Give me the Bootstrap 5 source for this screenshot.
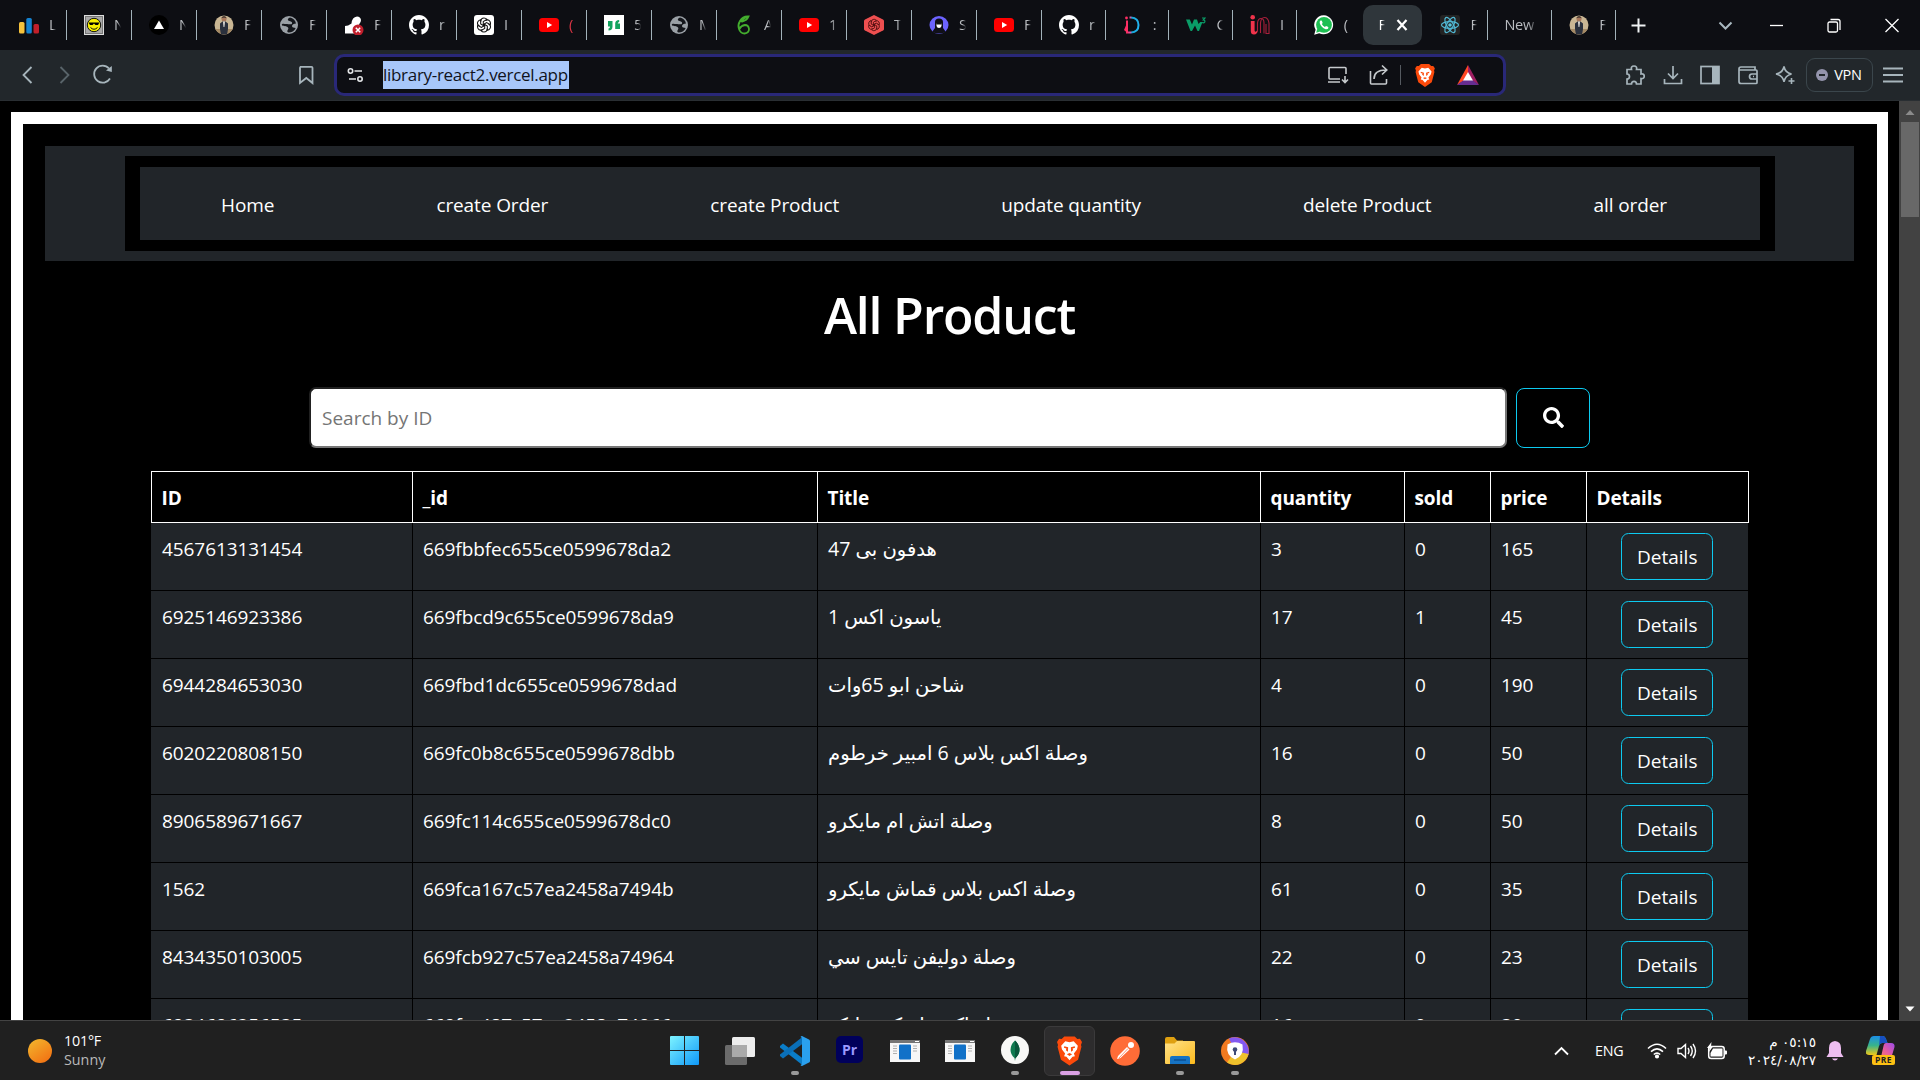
<!DOCTYPE html>
<html lang="en">
<head>
<meta charset="utf-8">
<title>All Product</title>
<link href="https://cdn.jsdelivr.net/npm/bootstrap@5.3.0/dist/css/bootstrap.min.css" rel="stylesheet">
<style>
html, body { height: 1080px; overflow: hidden; background: #000; }
body { font-family: "Open Sans", "Noto Sans", "DejaVu Sans", sans-serif; font-size: 19px; color: #fff; width: 1920px; line-height: 30px; }
svg { display: block; flex: none; }
/* browser chrome */
.tabstrip { height: 50px; background: #0d0e13; padding-left: 2px; }
.tab { width: 65px; height: 30px; padding-left: 17px; border-right: 1px solid #a2b2ba; flex: none; }
.tab-s { width: 63.7px; }
.tab svg { width: 20px; height: 20px; }
.tab-text { margin-left: 10px; width: 7px; overflow: hidden; white-space: nowrap; font-size: 14.5px; line-height: 20px; color: #b9bcc0; -webkit-mask-image: linear-gradient(90deg, #000 50%, transparent); mask-image: linear-gradient(90deg, #000 50%, transparent); }
.tab-wide { width: 34px; margin-left: -1px; letter-spacing: -.3px; -webkit-mask-image: linear-gradient(90deg, #000 70%, transparent); mask-image: linear-gradient(90deg, #000 70%, transparent); }
.tab-active { width: 59px; height: 40px; border-radius: 10px; background: #2f363b; flex: none; margin: 0 1px 0 3px; padding-left: 5px; }
.toolbar-row { height: 51px; background: #22272b; border-bottom: 1px solid #292e32; }
.urlbox { width: 1172px; height: 42px; margin-left: 20px; border: 3px solid #292878; border-radius: 10px; background: #0d0e13; padding-left: 10px; padding-right: 24px; }
.url-sel { background: #a8c7fa; color: #10131c; font-size: 17px; line-height: 28px; height: 28px; width: 186px; margin-left: 19px; white-space: nowrap; letter-spacing: -.3px; }
.url-sep { width: 1px; height: 20px; background: #555a60; margin: 0 14px 0 6px; }
.vpn { width: 67px; height: 34px; border: 1px solid #3b464c; border-radius: 9px; font-size: 14.5px; line-height: 20px; letter-spacing: -.2px; gap: 6px; margin: 0 -7px; }
.vpn-dot { width: 12px; height: 12px; border-radius: 50%; background: #9494ac; }
.tools { gap: 17.5px; padding-right: 17px; }
/* page */
.viewport { height: 919px; overflow: hidden; }
.page-frame { width: 1877px; margin: 11px 0 0 11px; height: 1000px; border: 12px solid #fff; border-right-width: 11px; border-bottom: 0; padding: 22px 23px 0 22px; flex: none; }
.site-nav { background: #212529; height: 115px; padding: 10px 79px 10px 80px; }
.site-nav-in { border: solid #000; border-width: 11px 15px; height: 95px; padding: 2px 12px 0 0; }
.site-nav a { color: #fff; text-decoration: none; letter-spacing: -.1px; }
.headline { font-size: 50px; font-weight: 600; line-height: 60px; margin: 24px 0 0; letter-spacing: -1.2px; }
.search-row { gap: 9px; margin-top: 41px; }
.search-in { width: 1198px; height: 61px; border: 2px inset #767676; border-radius: 7px; background: #fff; padding: 1px 11px 0; font-size: 19px; outline: 0; }
.search-in::placeholder { color: #757575; }
.search-btn { width: 74px; height: 60px; --bs-btn-border-color: #0dcaf0; --bs-btn-border-radius: 8px; margin-top: 2px; padding: 0 0 2px; }
.products { width: 1597px; table-layout: fixed; color: #fff; border-collapse: collapse; margin: 23px auto 0; }
.products th { border: 1px solid #fff; height: 51px; padding: 2px 10px 0; background: #000; font-size: 19px; letter-spacing: -.1px; line-height: 30px; }
.products td { border: 1px solid #000; height: 68px; padding: 11px 10px 0 10.5px; background: #212529; vertical-align: top; line-height: 30px; letter-spacing: -.08px; }
.products td:nth-child(3) { letter-spacing: 0; font-size: 19.6px; }
.products td:last-child { text-align: center; border-right: 0; padding: 10px; }
.products td:first-child { border-left-color: #212529; }
.btn-details { --bs-btn-color: #fff; --bs-btn-border-color: #0dcaf0; --bs-btn-border-radius: 7.5px; width: 92px; height: 47px; font-size: 19px; line-height: 30px; padding: 7px 0; vertical-align: top; }
.vscroll { width: 21px; background: #424242; flex: none; }
.vthumb { width: 18px; height: 95px; background: #686868; }
/* taskbar */
.taskbar { height: 60px; background: #202020; border-top: 1px solid #434343; }
.weather { width: 657px; padding-left: 28px; font-size: 14.3px; line-height: 19px; letter-spacing: -.2px; }
.sun { width: 24px; height: 24px; border-radius: 50%; background: linear-gradient(145deg, #f2b92e, #f26a10); }
.weather-text { margin: -2px 0 0 12px; }
.app { width: 55.050px; height: 50px; position: relative; border-radius: 6px; flex: none; }
.app.on::after { content: ""; position: absolute; bottom: 1px; left: 50%; margin-left: -4px; width: 8px; height: 4px; border-radius: 2px; background: #999; }
.app-live::before { content: ""; position: absolute; inset: 0 2px; border: 1px solid #3b3a3b; background: #2d2c2d; border-radius: 6px; }
.app-live svg { position: relative; }
.app.app-live::after { background: #d99fe3; width: 20px; margin-left: -10px; }
.tray { padding-right: 25px; font-size: 14.3px; }
.lang { margin: 0 22px 0 26px; width: 30px; letter-spacing: -.2px; }
.clock { font-family: "DejaVu Sans", sans-serif; font-size: 13.7px; line-height: 18px; width: 76px; margin: 0 10px 0 13px; }
</style>
</head>
<body>
<svg width="0" height="0" class="position-absolute">
<defs>
<linearGradient id="gw" x1="0" y1="0" x2="1" y2="1"><stop offset="0" stop-color="#7df3ff"/><stop offset="1" stop-color="#0f98f8"/></linearGradient>
<linearGradient id="gf" x1="0" y1="0" x2="1" y2="1"><stop offset="0" stop-color="#ffe28a"/><stop offset="1" stop-color="#fcba1c"/></linearGradient>
<linearGradient id="gc1" x1="0" y1="0" x2="0" y2="1"><stop offset="0" stop-color="#1b8fe8"/><stop offset=".5" stop-color="#38b38a"/><stop offset="1" stop-color="#f0c818"/></linearGradient>
<linearGradient id="gc2" x1="1" y1="0" x2="0" y2="1"><stop offset="0" stop-color="#9b4bea"/><stop offset=".5" stop-color="#e85d9f"/><stop offset="1" stop-color="#f98a50"/></linearGradient>
<linearGradient id="gd" x1="0" y1="0" x2="1" y2="0"><stop offset="0" stop-color="#ff2d62"/><stop offset=".3" stop-color="#c95fb0"/><stop offset=".45" stop-color="#14a7d8"/><stop offset="1" stop-color="#23b4f0"/></linearGradient>
</defs>
<symbol id="yt" viewBox="0 0 20 20"><rect y="3" width="20" height="14" rx="3.5" fill="#f00"/><path d="M8 7l5.2 3L8 13z" fill="#fff"/></symbol>
<symbol id="gh" viewBox="0 0 16 16"><path fill="#fff" d="M8 0C3.58 0 0 3.58 0 8c0 3.54 2.29 6.53 5.47 7.59.4.07.55-.17.55-.38 0-.19-.01-.82-.01-1.49-2.01.37-2.53-.49-2.69-.94-.09-.23-.48-.94-.82-1.13-.28-.15-.68-.52-.01-.53.63-.01 1.08.58 1.23.82.72 1.21 1.87.87 2.33.66.07-.52.28-.87.51-1.07-1.78-.2-3.64-.89-3.64-3.95 0-.87.31-1.59.82-2.15-.08-.2-.36-1.02.08-2.12 0 0 .67-.21 2.2.82.64-.18 1.32-.27 2-.27s1.36.09 2 .27c1.53-1.04 2.2-.82 2.2-.82.44 1.1.16 1.92.08 2.12.51.56.82 1.27.82 2.15 0 3.07-1.87 3.75-3.65 3.95.29.25.54.73.54 1.48 0 1.07-.01 1.93-.01 2.2 0 .21.15.46.55.38A8.01 8.01 0 0 0 16 8c0-4.42-3.58-8-8-8z"/></symbol>
<symbol id="globe" viewBox="0 0 20 20"><circle cx="10" cy="10" r="9" fill="#9aa0a6"/><path d="M11 2.5c-3 1-2.500 3-.5 3.500s3 1 2.500 2.500-4 .5-5.500.5S3 8 2.800 9.500 6 11 7.500 11.500 10 13 9 14.500 8 17 9.500 17.500c3 0 6-1.500 7.200-4.500-2-.2-3.700-.5-3.700-2s2-2.500 4-2.500C16.500 5 14 3 11 2.500z" fill="#14161b"/></symbol>
<symbol id="photo" viewBox="0 0 20 20"><clipPath id="pc"><circle cx="10" cy="10" r="9.500"/></clipPath><g clip-path="url(#pc)"><rect width="20" height="20" fill="#c9b694"/><rect y="14" width="20" height="6" fill="#a58a65"/><circle cx="10" cy="4" r="2.500" fill="#a8785c"/><path d="M7.500 3.500C7.500.5 12.500.5 12.500 3.500L11.500 2.500h-3z" fill="#1a1718"/><path d="M6 8.500l2.500-2h3l2.500 2V14l-1 6H7L6 14z" fill="#2a303d"/><path d="M9 6.500h2L10.400 12h-.9z" fill="#e8e4e0"/></g></symbol>
<symbol id="oai" viewBox="0 0 20 20"><g fill="none" stroke="currentColor" stroke-width="1.150"><g id="pet"><path d="M6.500 6.200Q6.500 2.300 10 2.300q2 0 3.300 1.500L9.200 6.200v4.600"/></g><use href="#pet" transform="rotate(60 10 10)"/><use href="#pet" transform="rotate(120 10 10)"/><use href="#pet" transform="rotate(180 10 10)"/><use href="#pet" transform="rotate(240 10 10)"/><use href="#pet" transform="rotate(300 10 10)"/></g></symbol>
<symbol id="brave" viewBox="0 0 24 28"><path fill="#fb4a0b" d="M7 0h10l2.500 2.500L22 2.300l2 3-1 3 .5 1.500-3.300 12.500L12 28l-8.200-5.700L.5 9.800 1 8.300l-1-3 2-3 2.500.2z"/><path fill="#fff" d="M12 5.500l4-.8 4 4.300-.8 3.500-3 3.800 1 2.700-2.300.5L12 22.800 9.100 19.500l-2.300-.5 1-2.700-3-3.800L4 9l4-4.300z"/><path fill="#fb4a0b" d="M7 9.500l3.700 1-.2 4.200-2-1.500.5-1.700-2.300-.6zM17 9.500l-3.700 1 .2 4.200 2-1.500-.5-1.700 2.300-.6zM9.500 17l2.500-1 2.500 1-2.500 1.700z"/></symbol>
<symbol id="win" viewBox="0 0 30 22"><rect width="30" height="22" fill="#f7f7f7"/><rect width="30" height="3" fill="#757575"/><path d="M25 1.500h4" stroke="#fff" stroke-width="1"/><rect x="9" y="4.500" width="12" height="15" rx="1" fill="#1171c8"/><path d="M3 6h4M3 8.500h4M3 11h4M3 13.500h4M23 6h4M23 8.500h4M23 11h4" stroke="#b0b0b0" stroke-width="1"/></symbol>
</svg>

<div class="d-flex flex-column">
<!-- tab strip -->
<div class="tabstrip d-flex align-items-center">
  <div class="tab d-flex align-items-center"><svg viewBox="0 0 20 20"><rect y="7" width="5.500" height="11.500" rx="1.500" fill="#f5c23c"/><rect x="7.300" y="3" width="5.500" height="15.500" rx="1.500" fill="#1482d0"/><rect x="14.500" y="9" width="5.500" height="9.500" rx="1.500" fill="#c01f2a"/></svg><span class="tab-text">L</span></div>
  <div class="tab d-flex align-items-center"><svg viewBox="0 0 20 20"><rect width="20" height="20" fill="#dcdcdc"/><rect x="1.500" y="1.500" width="17" height="17" fill="#a8a8a8" stroke="#777"/><circle cx="10" cy="10" r="6.700" fill="#f8f000" stroke="#111"/><path d="M4.500 7.500h11l-1.500 2.500h-2.500L10 8.500 8.500 10H6z"/><path d="M6.500 12.500q3.500 3.500 7 0" fill="none" stroke="#111"/></svg><span class="tab-text">N</span></div>
  <div class="tab d-flex align-items-center"><svg viewBox="0 0 20 20"><circle cx="10" cy="10" r="10"/><path d="M10 5.500l5 8.500H5z" fill="#fff"/></svg><span class="tab-text">N</span></div>
  <div class="tab d-flex align-items-center"><svg><use href="#photo"/></svg><span class="tab-text">F</span></div>
  <div class="tab d-flex align-items-center"><svg><use href="#globe"/></svg><span class="tab-text">F</span></div>
  <div class="tab d-flex align-items-center"><svg viewBox="0 0 20 20"><path d="M1 18.500V11q3 0 6.500-2.500Q8 2 13 1.500q3.500 0 4 3.500 0 2.500-2 4.500l2 2v7z" fill="#fff"/><circle cx="14" cy="15" r="5.500" fill="#c11f2c"/><path d="M11.800 12.800l4.400 4.400m0-4.400l-4.400 4.400" stroke="#fff" stroke-width="1.500"/></svg><span class="tab-text">F</span></div>
  <div class="tab d-flex align-items-center"><svg><use href="#gh"/></svg><span class="tab-text">r</span></div>
  <div class="tab d-flex align-items-center"><svg viewBox="0 0 20 20" color="#111"><rect width="20" height="20" rx="3" fill="#fff"/><use href="#oai" x="1" y="1" width="18" height="18"/></svg><span class="tab-text">I</span></div>
  <div class="tab d-flex align-items-center"><svg><use href="#yt"/></svg><span class="tab-text text-danger">(</span></div>
  <div class="tab d-flex align-items-center"><svg viewBox="0 0 20 20"><rect width="20" height="20" fill="#fff"/><path d="M4 6h4.500v5.500q0 4-4 4v-2q1.500 0 1.500-2H4zM16 14h-4.800V8.500q0-3.500 4-3.500v2q-1.500 0-1.500 1.500H16z" fill="#12a35e"/></svg><span class="tab-text">5</span></div>
  <div class="tab d-flex align-items-center"><svg><use href="#globe"/></svg><span class="tab-text">M</span></div>
  <div class="tab d-flex align-items-center"><svg viewBox="0 0 20 20"><path d="M14.500 1.500Q9 1 6 6q-2.500 4-1 8 1.500 4.500 5.500 4.500 4.500-.5 4.500-4.500-.5-4-4-4-4 .5-5.500 4M7 7q3-5 7.500-5.500Q13 5.500 8 6.500" fill="none" stroke="#43ad2e" stroke-width="1.800"/></svg><span class="tab-text">A</span></div>
  <div class="tab d-flex align-items-center"><svg><use href="#yt"/></svg><span class="tab-text">1</span></div>
  <div class="tab d-flex align-items-center"><svg viewBox="0 0 20 20" color="#501010"><path d="M10 0l9 4.500q1 .5 1 1.500v8q0 1-1 1.500L10 20l-9-4.500Q0 15 0 14V6q0-1 1-1.500z" fill="#ee4f50"/><use href="#oai" x="2.500" y="2.500" width="15" height="15"/></svg><span class="tab-text">T</span></div>
  <div class="tab d-flex align-items-center"><svg viewBox="0 0 20 20"><ellipse cx="10" cy="10" rx="9.500" ry="9" fill="#6c63ff"/><path d="M6 13V7q0-3.500 4-3.500T14 7v6l3 4q-7 3-14 0z" fill="#101018"/><path d="M7.500 8.500h5v2.500q-.5 2-2.500 2t-2.500-2z" fill="#fff"/><rect x="7.500" y="7.500" width="5" height="2" fill="#101018"/></svg><span class="tab-text">S</span></div>
  <div class="tab d-flex align-items-center"><svg><use href="#yt"/></svg><span class="tab-text">F</span></div>
  <div class="tab tab-s d-flex align-items-center"><svg><use href="#gh"/></svg><span class="tab-text">r</span></div>
  <div class="tab tab-s d-flex align-items-center"><svg viewBox="0 0 20 20"><path d="M4 5.500v12H8q7.500-.5 7.500-7.500T8 2.500H6.500" fill="none" stroke="url(#gd)" stroke-width="2"/><circle cx="3.500" cy="3" r="1.400" fill="#ff2d62"/><path d="M1 15l3.500-8v11z" fill="#ff2d62"/></svg><span class="tab-text">:</span></div>
  <div class="tab tab-s d-flex align-items-center"><svg viewBox="0 0 20 20"><path d="M0 4.500h3.800L6 9.500l2-5h3l1.500 4.500 1.700-2h2.300L13 16h-1.500L9 10.500 6 16H4.500z" fill="#0a9d68"/><path d="M16 3h3l-1.800 2q2.300.3 1.500 2.200-.9 1.200-2.700.3" fill="none" stroke="#0a9d68" stroke-width="1.200"/></svg><span class="tab-text">C</span></div>
  <div class="tab tab-s d-flex align-items-center"><svg viewBox="0 0 20 20"><path d="M.8 6h3.800v9.500q0 1.500 1.500 1L8 14.500q-.5 5-4 5Q.8 19.500.8 16z" fill="#f0334b"/><circle cx="2.700" cy="2.300" r="2.300" fill="#f0334b"/><path d="M7.500 16V8q.5-4.500 3.500-4.500T14 8v10.500M10.500 18V8q.5-5.500 4-5.500T19 8v10.500h-3V9" fill="none" stroke="#a81f3b" stroke-width="1.100"/></svg><span class="tab-text">I</span></div>
  <div class="tab tab-s d-flex align-items-center border-0"><svg viewBox="0 0 20 20"><path d="M10 .3a9.500 9.500 0 1 1-4.800 17.900L.2 19.700l1.400-5A9.500 9.500 0 0 1 10 .3z" fill="#fff"/><circle cx="10" cy="9.800" r="7.900" fill="#1dbf52"/><path d="M2.200 17.700l1-4 3 2.800z" fill="#1dbf52"/><path d="M7 5.300q-1.700.8-1.300 2.800 1.300 4.600 6 6.200 2.300.2 2.800-1.600 0-.8-2.500-1.700l-1.100 1.100q-2-.8-3.100-3l.9-1.100Q8 5.300 7 5.300z" fill="#fff"/></svg><span class="tab-text">(</span></div>
  <div class="tab-active d-flex align-items-center"><span class="tab-text text-white">F</span><svg class="ms-2" width="18" height="14" viewBox="-2 0 18 14"><path d="M2.500 2l9 10m0-10l-9 10" stroke="#fff" stroke-width="2.200"/></svg></div>
  <div class="tab d-flex align-items-center"><svg viewBox="0 0 20 20"><rect width="20" height="20" rx="3" fill="#232323"/><g fill="none" stroke="#51b8d4" stroke-width="1.200"><ellipse cx="10" cy="10" rx="8.500" ry="3.300"/><ellipse cx="10" cy="10" rx="8.500" ry="3.300" transform="rotate(60 10 10)"/><ellipse cx="10" cy="10" rx="8.500" ry="3.300" transform="rotate(120 10 10)"/></g><circle cx="10" cy="10" r="1.800" fill="#58c4dc"/></svg><span class="tab-text">F</span></div>
  <div class="tab tab-s d-flex align-items-center"><span class="tab-text tab-wide">New</span></div>
  <div class="tab tab-s d-flex align-items-center"><svg><use href="#photo"/></svg><span class="tab-text">F</span></div>
  <svg style="margin-left:15px" width="15" height="15" viewBox="0 0 15 15"><path d="M7.500.5v14M.5 7.500h14" stroke="#f0f2f4" stroke-width="2"/></svg>
  <div class="d-flex align-items-center ms-auto" style="padding-right:21px">
    <svg width="15" height="15" viewBox="0 0 15 15"><path d="M1.500 4.500l6 6 6-6" fill="none" stroke="#a9b8c0" stroke-width="2"/></svg>
    <svg class="ms-4" width="30" height="15" viewBox="-13 0 30 15"><path d="M0 7.500h13" stroke="#fff" stroke-width="1.300"/></svg>
    <svg width="56" height="15" viewBox="-40 0 56 15"><rect x="1" y="4" width="9.500" height="10" rx="1.500" fill="none" stroke="#fff" stroke-width="1.300"/><path d="M3.500 1.500H11q2 0 2 2V12" fill="none" stroke="#fff" stroke-width="1.300"/></svg>
    <svg width="56" height="15" viewBox="-42 0 56 15"><path d="M.5 1l13 13m0-13l-13 13" stroke="#fff" stroke-width="1.300"/></svg>
  </div>
</div>

<!-- address bar -->
<div class="toolbar-row d-flex align-items-center">
  <svg width="335" height="42" viewBox="0 0 335 42" fill="none" stroke="#a7b5bc" stroke-width="1.800" style="margin-right:-21px"><path d="M31.500 13l-8 8 8 8"/><path d="M60.500 13l8 8-8 8" stroke="#59646a"/><path d="M109 14.500a8.500 8.500 0 1 0 1 10"/><path d="M106 16.500l5.800 1.500V12z" fill="#a7b5bc" stroke="none"/><path d="M300 12.800h11.500q1 0 1 1V29l-6.200-5-6.300 5V13.800q0-1 1-1z"/></svg>
  <div class="urlbox d-flex align-items-center">
    <svg width="17" height="16" viewBox="0 0 17 16" fill="none" stroke="#e4e6e8" stroke-width="1.600"><circle cx="3.500" cy="4" r="2.200"/><path d="M7.500 4H15M2 12h7"/><circle cx="13" cy="12" r="2.200"/></svg>
    <span class="url-sel">library-react2.vercel.app</span>
    <div class="d-flex align-items-center ms-auto">
      <svg width="22" height="20" viewBox="0 0 22 20" fill="none" stroke="#c6cacd" stroke-width="1.600"><path d="M19 9V3.500q0-1-1-1H3q-1 0-1 1V13q0 1 1 1h10M1 17h12M18 11v6m-3-2.500l3 3 3-3"/></svg>
      <svg class="ms-3 me-1" width="25" height="22" viewBox="-4 0 25 22" fill="none" stroke="#c6cacd" stroke-width="1.600"><path d="M1.500 7v12q0 1 1 1h14q1 0 1-1v-4M5 15q0-9 12-9M13 1.500L17.800 6 13 10.500"/></svg>
      <div class="url-sep"></div>
      <svg width="20" height="23"><use href="#brave"/></svg>
      <svg style="margin-left:22px" width="22" height="20" viewBox="0 0 22 20"><path d="M11 0L0 20l11-7z" fill="#ff4724"/><path d="M11 0l11 20-11-7z" fill="#9e1f63"/><path d="M0 20h22l-11-8z" fill="#662d91"/><path d="M11 7l5 8.500H6z" fill="#fff"/></svg>
    </div>
  </div>
  <div class="tools d-flex align-items-center ms-auto">
    <svg width="20" height="20" viewBox="0 0 20 20" fill="none" stroke="#a7b5bc" stroke-width="1.700"><path d="M2 4.500h4.500q-.8-3.500 2.500-3.500t2.500 3.500H16V9q3.200-.5 3.200 2.200T16 13.500V19h-4.500q0-2.700-2.500-2.700T6.500 19H2v-5q2.500 0 2.500-2.500T2 9z"/></svg>
    <svg width="20" height="20" viewBox="0 0 20 20" fill="none" stroke="#a7b5bc" stroke-width="1.700"><path d="M10 1v12M5 8.500l5 5 5-5M1.500 14v4.500h17V14"/></svg>
    <svg width="20" height="20" viewBox="0 0 20 20"><rect x="1" y="1.500" width="18" height="17" fill="none" stroke="#a7b5bc" stroke-width="1.700"/><path d="M12 1h7v18h-7z" fill="#a7b5bc"/></svg>
    <svg width="20" height="20" viewBox="0 0 20 20" fill="none" stroke="#a7b5bc" stroke-width="1.700"><path d="M17 5V2H3Q1 2 1 4v12.500q0 2 2 2h15q1 0 1-1V6q0-1-1-1H1M19 9h-5q-2.500 0-2.500 2.500T14 14h5M15 11.500h1"/></svg>
    <svg width="20" height="20" viewBox="0 0 20 20" fill="none" stroke="#a7b5bc" stroke-width="1.600"><path d="M9 1.500q1 6 7.500 7.500Q10 10.500 9 17 8 10.500 1 9 8 7.500 9 1.500z"/><path d="M16.500 13v6m-3-3h6"/></svg>
    <div class="vpn d-flex align-items-center justify-content-center"><span class="vpn-dot d-flex align-items-center justify-content-center"><svg width="6" height="2"><rect width="6" height="2" fill="#22272b"/></svg></span>VPN</div>
    <svg width="20" height="16" viewBox="0 0 20 16"><path d="M0 1.500h20M0 8h20M0 14.500h20" stroke="#a7b5bc" stroke-width="1.800"/></svg>
  </div>
</div>

<!-- page -->
<div class="viewport d-flex">
  <div class="page-frame">
    <nav class="site-nav"><div class="site-nav-in d-flex justify-content-around align-items-center">
      <a href="#">Home</a><a href="#">create Order</a><a href="#">create Product</a><a href="#">update quantity</a><a href="#">delete Product</a><a href="#">all order</a>
    </div></nav>
    <h1 class="headline text-center">All Product</h1>
    <div class="search-row d-flex justify-content-center align-items-center">
      <input class="search-in" type="text" placeholder="Search by ID">
      <button class="btn search-btn d-flex align-items-center justify-content-center"><svg width="21" height="21" viewBox="0 0 512 512"><path fill="#fff" d="M505 442.700L405.300 343c-4.500-4.500-10.600-7-17-7H372c27.600-35.300 44-79.700 44-128C416 93.100 322.900 0 208 0S0 93.100 0 208s93.100 208 208 208c48.300 0 92.700-16.400 128-44v16.300c0 6.400 2.500 12.500 7 17l99.700 99.700c9.400 9.400 24.600 9.400 33.900 0l28.300-28.300c9.400-9.400 9.400-24.600.1-34zM208 336c-70.700 0-128-57.200-128-128 0-70.700 57.200-128 128-128 70.700 0 128 57.200 128 128 0 70.700-57.200 128-128 128z"/></svg></button>
    </div>
    <table class="products">
      <colgroup><col style="width:261px"><col style="width:405px"><col style="width:443px"><col style="width:144px"><col style="width:86px"><col style="width:96px"><col style="width:162px"></colgroup>
      <thead><tr><th>ID</th><th>_id</th><th>Title</th><th>quantity</th><th>sold</th><th>price</th><th>Details</th></tr></thead>
      <tbody>
      <tr><td>4567613131454</td><td>669fbbfec655ce0599678da2</td><td>هدفون بى 47</td><td>3</td><td>0</td><td>165</td><td><button class="btn btn-details">Details</button></td></tr>
      <tr><td>6925146923386</td><td>669fbcd9c655ce0599678da9</td><td>ياسون اكس 1</td><td>17</td><td>1</td><td>45</td><td><button class="btn btn-details">Details</button></td></tr>
      <tr><td>6944284653030</td><td>669fbd1dc655ce0599678dad</td><td>شاحن ابو 65وات</td><td>4</td><td>0</td><td>190</td><td><button class="btn btn-details">Details</button></td></tr>
      <tr><td>6020220808150</td><td>669fc0b8c655ce0599678dbb</td><td>وصلة اكس بلاس 6 امبير خرطوم</td><td>16</td><td>0</td><td>50</td><td><button class="btn btn-details">Details</button></td></tr>
      <tr><td>8906589671667</td><td>669fc114c655ce0599678dc0</td><td>وصلة اتش ام مايكرو</td><td>8</td><td>0</td><td>50</td><td><button class="btn btn-details">Details</button></td></tr>
      <tr><td>1562</td><td>669fca167c57ea2458a7494b</td><td>وصلة اكس بلاس قماش مايكرو</td><td>61</td><td>0</td><td>35</td><td><button class="btn btn-details">Details</button></td></tr>
      <tr><td>8434350103005</td><td>669fcb927c57ea2458a74964</td><td>وصلة دوليفن تايس سي</td><td>22</td><td>0</td><td>23</td><td><button class="btn btn-details">Details</button></td></tr>
      <tr><td>6934696256535</td><td>669fcc487c57ea2458a74966</td><td>وصلة اكس ام كي مايكة</td><td>16</td><td>0</td><td>30</td><td><button class="btn btn-details">Details</button></td></tr>
      </tbody>
    </table>
  </div>
  <div class="vscroll d-flex flex-column align-items-center ms-auto">
    <svg width="10" height="21" viewBox="0 0 10 21"><path d="M5 9l4.500 5h-9z" fill="#8b8b8b"/></svg>
    <div class="vthumb"></div>
    <svg class="mt-auto" width="10" height="20" viewBox="0 0 10 20"><path d="M5 11.500L.5 6.500h9z" fill="#fff"/></svg>
  </div>
</div>

<!-- taskbar -->
<div class="taskbar d-flex align-items-center">
  <div class="weather d-flex align-items-center flex-shrink-0"><div class="sun"></div><div class="weather-text"><div>101°F</div><div style="color:#b9b9b9;letter-spacing:0">Sunny</div></div></div>
  <div class="app d-flex align-items-center justify-content-center"><svg width="29" height="29" viewBox="0 0 29 29"><path d="M0 1q0-1 1-1h13v14H0zM15 0h13q1 0 1 1v13H15zM0 15h14v14H1q-1 0-1-1zM15 15h14v13q0 1-1 1H15z" fill="url(#gw)"/></svg></div>
  <div class="app d-flex align-items-center justify-content-center"><svg width="30" height="28" viewBox="0 0 30 28"><rect y="8" width="22" height="20" rx="1.500" fill="#6b6b6b"/><rect x="7" y="0" width="23" height="20" rx="1.500" fill="#ededed"/><path d="M7 8h15v12H7z" fill="#aaa"/></svg></div>
  <div class="app on d-flex align-items-center justify-content-center"><svg width="30" height="30" viewBox="0 0 30 30"><path d="M0 10l3-2.500L23 22.500v7L0 11.500z" fill="#0a7dc8"/><path d="M0 20l3 2.500L23 7.500V.5L0 18.500z" fill="#0a6fb8"/><path d="M22 0l7 3.500q1 .5 1 1.500v20q0 1-1 1.500L22 30q-1 0-1.500-1 1.500 0 1.500-2V3q0-2-1.500-2 .5-1 1.500-1z" fill="#2aa0ee"/></svg></div>
  <div class="app d-flex align-items-center justify-content-center"><svg width="27" height="27" viewBox="0 0 27 27" style="margin-bottom:3px"><rect width="27" height="27" rx="5" fill="#00005b"/><text x="13.500" y="18.500" font-family="Open Sans" font-weight="700" font-size="14" fill="#9b99ff" text-anchor="middle">Pr</text></svg></div>
  <div class="app d-flex align-items-center justify-content-center"><svg width="30" height="22"><use href="#win"/></svg></div>
  <div class="app d-flex align-items-center justify-content-center"><svg width="30" height="22"><use href="#win"/></svg></div>
  <div class="app on d-flex align-items-center justify-content-center"><svg width="28" height="28" viewBox="0 0 28 28" style="margin-bottom:2px"><circle cx="14" cy="14" r="14" fill="#f8f8f6"/><path d="M14 4.500q4.500 4 4.500 9.500 0 4.500-4 8l-.5 3-.5-3q-4-3.500-4-8 0-5.500 4.500-9.500z" fill="#0f7a4f"/><path d="M14 4.500q4.500 4 4.500 9.500 0 4.500-4 8l-.5 1z" fill="#09573b"/></svg></div>
  <div class="app app-live on d-flex align-items-center justify-content-center"><svg width="25" height="30"><use href="#brave"/></svg></div>
  <div class="app d-flex align-items-center justify-content-center"><svg width="30" height="30" viewBox="0 0 30 30"><circle cx="15" cy="15" r="14.800" fill="#ff6c37"/><path d="M7 23l1-3 9-9 2.500 2.500-9 8.500z" fill="#fff"/><circle cx="21" cy="9" r="3" fill="#fff"/><path d="M9 22l9-9.500" stroke="#ff6c37" stroke-width=".7"/></svg></div>
  <div class="app on d-flex align-items-center justify-content-center"><svg width="30" height="27" viewBox="0 0 30 27"><path d="M0 2q0-2 2-2h7l3 3.500h6V9H0z" fill="#dfa010"/><path d="M0 6.500h9.500L12 4h17q1 0 1 1v21q0 1-1 1H1q-1 0-1-1z" fill="url(#gf)"/><path d="M5 27v-6q0-2 2-2h16q2 0 2 2v6z" fill="#1673c4"/><path d="M9 23h12" stroke="#0c4f93" stroke-width="1.500"/></svg></div>
  <div class="app on d-flex align-items-center justify-content-center"><svg width="28" height="28" viewBox="0 0 28 28"><circle cx="14" cy="14" r="14" fill="#f27a20"/><path d="M8 1.500A14 14 0 0 1 26.500 20L14 14z" fill="#8358f0"/><path d="M27.500 17A14 14 0 0 1 6 25.500L14 14z" fill="#eec12c"/><path d="M6.500 7.500Q14 3 21.500 7.500q2 11-7.500 15-9.500-4-7.500-15z" fill="#fff"/><circle cx="14" cy="12.500" r="2.300" fill="#3e4b78"/><path d="M13 13h2v5h-2z" fill="#3e4b78"/></svg></div>
  <div class="tray d-flex align-items-center ms-auto">
    <svg width="15" height="10" viewBox="0 0 15 10"><path d="M1 8.500l6.500-6.500L14 8.500" fill="none" stroke="#fff" stroke-width="1.800"/></svg>
    <span class="lang">ENG</span>
    <svg width="20" height="17" viewBox="0 0 20 17" fill="none" stroke="#fff" stroke-width="1.600"><path d="M1 6.500q9-8.500 18 0M4 9.700q6-5.500 12 0M6.800 12.500q3.200-2.800 6.400 0"/><circle cx="10" cy="14.500" r="1.300" fill="#fff"/></svg>
    <svg style="margin:0 10px" width="20" height="18" viewBox="0 0 20 18" fill="none" stroke="#fff" stroke-width="1.400"><path d="M1 6.500h3l4.500-4v13L4 11.500H1zM11 6q2 3 0 6M13.500 4q3.500 5 0 10M16 2q5 7 0 14"/></svg>
    <svg width="20" height="18" viewBox="0 0 20 18"><rect x="1.700" y="4.500" width="15.500" height="12" rx="2.500" fill="none" stroke="#fff" stroke-width="1.500"/><path d="M6 6.500h9.500v8H3.500V11z" fill="#fff"/><path d="M18 8.500h1q1 0 1 1v2q0 1-1 1h-1zM4.500 0L0 6h2.500L2 10l4-5.500H4z" fill="#fff"/></svg>
    <div class="clock text-end"><div dir="rtl">٠٥:١٥ م</div><div dir="rtl" class="text-nowrap">٢٠٢٤/٠٨/٢٧</div></div>
    <svg width="18" height="20" viewBox="0 0 18 20"><path d="M9 0q6 .5 6 7v5l2.500 4H.5L3 12V7q0-6.500 6-7z" fill="#edbdf0"/><path d="M6 17.500h6q-1 2-3 2t-3-2z" fill="#edbdf0"/></svg>
    <svg style="margin-left:22px" width="29" height="29" viewBox="0 0 29 29"><path d="M8 0h9q2 0 3 3l1.500 4H16q-2 0-3 3l-2.500 9H3q-4 0-3-4L4 3q1-3 4-3z" fill="url(#gc1)"/><path d="M14 0h3q2 0 3 3l1.500 4H16q-2 0-3 3z" fill="#164fc0"/><path d="M20 7h5q4 0 3.500 4l-3 10q-1 3-4 3H12q2 0 3-3l2.500-11q.5-3 2.500-3z" fill="url(#gc2)"/><rect x="6" y="19" width="23" height="10" rx="2" fill="#fcc013"/><text x="17.500" y="27" font-family="Open Sans" font-weight="700" font-size="8.500" letter-spacing=".4" fill="#222" text-anchor="middle">PRE</text></svg>
  </div>
</div>
</div>
<script src="https://cdn.jsdelivr.net/npm/bootstrap@5.3.0/dist/js/bootstrap.bundle.min.js"></script>
</body>
</html>
